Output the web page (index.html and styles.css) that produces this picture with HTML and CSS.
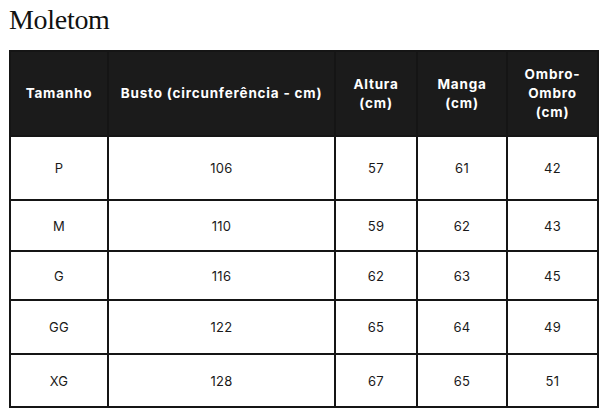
FILE: index.html
```html
<!DOCTYPE html>
<html lang="pt">
<head>
<meta charset="utf-8">
<link rel="stylesheet" href="styles.css">
</head>
<body>
<h1 class="title">Moletom</h1>
<table class="sizes">
  <colgroup>
    <col class="c1"><col class="c2"><col class="c3"><col class="c4"><col class="c5">
  </colgroup>
  <thead>
    <tr class="head">
      <th>Tamanho</th>
      <th>Busto (circunferência - cm)</th>
      <th>Altura<br>(cm)</th>
      <th>Manga<br>(cm)</th>
      <th>Ombro-<br>Ombro<br>(cm)</th>
    </tr>
  </thead>
  <tbody>
    <tr class="r1"><td>P</td><td>106</td><td>57</td><td>61</td><td>42</td></tr>
    <tr class="r2"><td>M</td><td>110</td><td>59</td><td>62</td><td>43</td></tr>
    <tr class="r3"><td>G</td><td>116</td><td>62</td><td>63</td><td>45</td></tr>
    <tr class="r4"><td>GG</td><td>122</td><td>65</td><td>64</td><td>49</td></tr>
    <tr class="r5"><td>XG</td><td>128</td><td>67</td><td>65</td><td>51</td></tr>
  </tbody>
</table>
</body>
</html>
```
FILE: styles.css
```css
html, body { margin: 0; padding: 0; background: #fff; }
body { padding: 0 0 0 9px; }
.title {
  font-family: "Liberation Serif", serif;
  font-weight: 400;
  font-size: 28px;
  line-height: 32px;
  margin: 4px 0 14px 0;
  color: #111;
  letter-spacing: -0.3px;
}
.sizes {
  border-collapse: collapse;
  width: 588px;
  table-layout: fixed;
  font-family: "Inter", "DejaVu Sans", sans-serif;
  font-size: 13px;
  color: #1a1a1a;
  letter-spacing: 0.3px;
}
.c1 { width: 98px; }
.c2 { width: 227px; }
.c3 { width: 82px; }
.c4 { width: 90px; }
.c5 { width: 91px; }
.sizes th, .sizes td {
  border: 2px solid #151515;
  text-align: center;
  vertical-align: middle;
  padding: 0;
}
.sizes th {
  background: #1b1b1b;
  color: #fff;
  font-weight: 700;
  font-size: 13.5px;
  line-height: 19px;
  letter-spacing: 0.8px;
}
.head { height: 85px; }
.r1 { height: 64px; }
.r2 { height: 51px; }
.r3 { height: 49px; }
.r4 { height: 54px; }
.r5 { height: 53px; }
```
